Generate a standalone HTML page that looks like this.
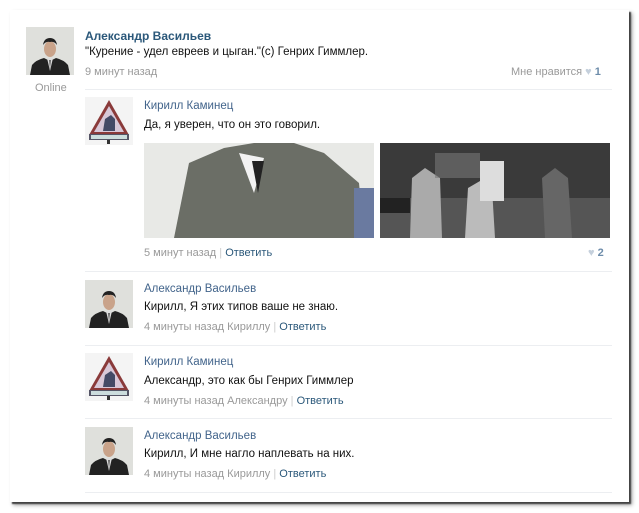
<!DOCTYPE html>
<html><head><meta charset="utf-8"><style>
body{margin:0;width:639px;height:513px;background:#fff;font-family:"Liberation Sans",sans-serif;font-size:11.5px;position:relative;overflow:hidden}
.card{position:absolute;left:10px;top:10px;width:619px;height:492px;background:#fff;box-shadow:2px 2px 1px #444,3px 3px 4px #999;}
.a{position:absolute}
.nm{color:#2b587a;font-weight:bold;font-size:12px}
.rn{color:#42648b;font-size:11.5px}
.tx{color:#111;font-size:11.5px}
.tm{color:#999;font-size:11px}
.lk{color:#2b587a}
.sep{position:absolute;height:1px;background:#eceef1}
.av{position:absolute;width:48px;height:48px}
</style></head><body>
<div class="card"></div>
<svg width="0" height="0" style="position:absolute"><defs>
<symbol id="man" viewBox="0 0 48 48"><rect width="48" height="48" fill="#dfe0dc"/><path d="M4 48 L6 38 Q10 33 18 31 L24 34 L30 31 Q38 33 42 38 L44 48Z" fill="#222"/><path d="M21 31 L24 44 L27 31Z" fill="#ddd"/><path d="M23 33 L24 42 L25 33Z" fill="#666"/><ellipse cx="24" cy="22" rx="6" ry="8" fill="#c9a38a"/><path d="M17 18 Q18 11 24 11 Q30 11 31 18 Q28 14 24 15 Q20 14 17 18Z" fill="#222"/></symbol>
<symbol id="tri" viewBox="0 0 48 48"><rect width="48" height="48" fill="#f4f4f4"/><path d="M24 3 L44 38 L4 38Z" fill="#8a3a3a"/><path d="M24 9 L39 35 L9 35Z" fill="#d8c8d8"/><path d="M18 34 L20 22 L26 18 L30 22 L30 34Z" fill="#444a66"/><rect x="4" y="37" width="40" height="6" fill="#556" /><rect x="6" y="38" width="36" height="4" fill="#cdd"/><rect x="22" y="43" width="3" height="4" fill="#333"/></symbol>
</defs></svg>

<svg class="av" style="left:26px;top:27px"><use href="#man"/></svg>
<div class="a tm" style="left:35px;top:82px;color:#999">Online</div>
<div class="a nm" style="left:85px;top:29px">Александр Васильев</div>
<div class="a tx" style="left:85px;top:46px">"Курение - удел евреев и цыган."(с) Генрих Гиммлер.</div>
<div class="a tm" style="left:85px;top:66px">9 минут назад</div>
<div class="a tm" style="left:511px;top:66px">Мне нравится <span style="color:#c5d0dc">♥</span> <b style="color:#6d8caa">1</b></div>
<div class="sep" style="left:85px;top:89px;width:527px"></div>

<svg class="av" style="left:85px;top:97px"><use href="#tri"/></svg>
<div class="a rn" style="left:144px;top:100px">Кирилл Каминец</div>
<div class="a tx" style="left:144px;top:119px">Да, я уверен, что он это говорил.</div>
<svg class="a" style="left:144px;top:143px" width="230" height="95"><rect width="230" height="95" fill="#e8e9e6"/><path d="M30 95 L45 20 L80 5 L110 0 L150 0 L180 10 L215 40 L220 95Z" fill="#6b6e66"/><path d="M95 10 L110 50 L120 15Z" fill="#f2f2f2"/><path d="M108 18 L114 50 L120 18Z" fill="#222"/><rect x="210" y="45" width="20" height="50" fill="#6a7aa0"/></svg>
<svg class="a" style="left:380px;top:143px" width="230" height="95"><rect width="230" height="95" fill="#3a3a3a"/><rect x="0" y="55" width="230" height="40" fill="#555"/><rect x="0" y="55" width="30" height="15" fill="#222"/><path d="M30 95 L32 35 L45 25 L60 35 L62 95Z" fill="#aaa"/><path d="M85 95 L88 45 L100 38 L112 45 L115 95Z" fill="#bbb"/><rect x="100" y="18" width="24" height="40" fill="#ddd"/><path d="M165 95 L162 35 L175 25 L188 35 L192 95Z" fill="#666"/><rect x="55" y="10" width="45" height="25" fill="#777" opacity=".6"/></svg>
<div class="a tm" style="left:144px;top:247px">5 минут назад <span style="color:#ccc">|</span> <span class="lk">Ответить</span></div>
<div class="a tm" style="left:588px;top:247px"><span style="color:#c5d0dc">♥</span> <b style="color:#6d8caa">2</b></div>
<div class="sep" style="left:85px;top:271px;width:527px"></div>

<svg class="av" style="left:85px;top:280px"><use href="#man"/></svg>
<div class="a rn" style="left:144px;top:283px">Александр Васильев</div>
<div class="a tx" style="left:144px;top:301px">Кирилл, Я этих типов ваше не знаю.</div>
<div class="a tm" style="left:144px;top:321px">4 минуты назад Кириллу <span style="color:#ccc">|</span> <span class="lk">Ответить</span></div>
<div class="sep" style="left:85px;top:345px;width:527px"></div>

<svg class="av" style="left:85px;top:353px"><use href="#tri"/></svg>
<div class="a rn" style="left:144px;top:356px">Кирилл Каминец</div>
<div class="a tx" style="left:144px;top:375px">Александр, это как бы Генрих Гиммлер</div>
<div class="a tm" style="left:144px;top:395px">4 минуты назад Александру <span style="color:#ccc">|</span> <span class="lk">Ответить</span></div>
<div class="sep" style="left:85px;top:418px;width:527px"></div>

<svg class="av" style="left:85px;top:427px"><use href="#man"/></svg>
<div class="a rn" style="left:144px;top:430px">Александр Васильев</div>
<div class="a tx" style="left:144px;top:448px">Кирилл, И мне нагло наплевать на них.</div>
<div class="a tm" style="left:144px;top:468px">4 минуты назад Кириллу <span style="color:#ccc">|</span> <span class="lk">Ответить</span></div>
<div class="sep" style="left:85px;top:492px;width:527px"></div>
</body></html>
